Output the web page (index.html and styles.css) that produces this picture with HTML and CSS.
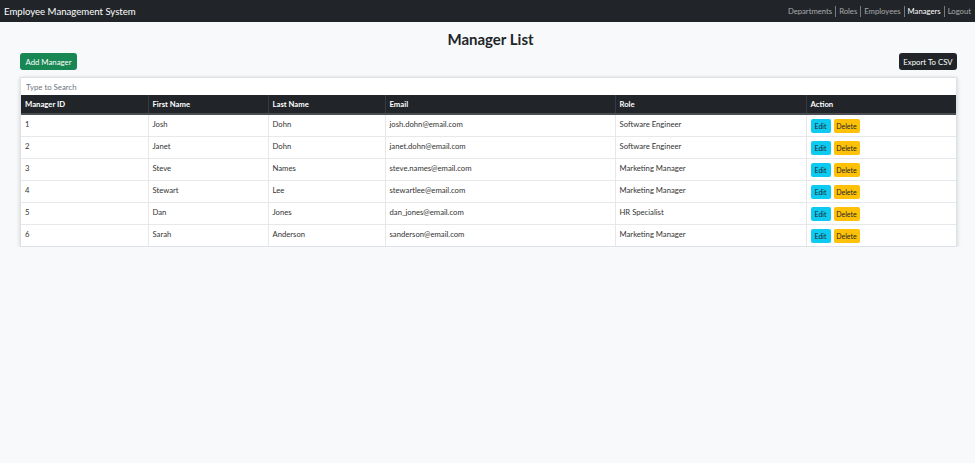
FILE: index.html
```html
<!DOCTYPE html>
<html>
<head>
<meta charset="utf-8">
<link rel="stylesheet" href="styles.css">
</head>
<body>
<nav class="navbar">
  <span class="brand">Employee Management System</span>
  <ul class="links">
    <li>Departments</li>
    <li>Roles</li>
    <li>Employees</li>
    <li class="active">Managers</li>
    <li>Logout</li>
  </ul>
</nav>
<main class="container">
  <h1 class="title">Manager List</h1>
  <div class="toolbar">
    <button class="btn btn-green">Add Manager</button>
    <button class="btn btn-dark">Export To CSV</button>
  </div>
  <div class="card">
    <input class="search" type="text" placeholder="Type to Search">
    <table class="table">
      <colgroup>
        <col style="width:127px"><col style="width:120px"><col style="width:117px"><col style="width:230px"><col style="width:191px"><col>
      </colgroup>
      <thead>
        <tr><th>Manager ID</th><th>First Name</th><th>Last Name</th><th>Email</th><th>Role</th><th>Action</th></tr>
      </thead>
      <tbody>
        <tr><td>1</td><td>Josh</td><td>Dohn</td><td>josh.dohn@email.com</td><td>Software Engineer</td><td><span class="act"><button class="sm edit">Edit</button><button class="sm del">Delete</button></span></td></tr>
        <tr><td>2</td><td>Janet</td><td>Dohn</td><td>janet.dohn@email.com</td><td>Software Engineer</td><td><span class="act"><button class="sm edit">Edit</button><button class="sm del">Delete</button></span></td></tr>
        <tr><td>3</td><td>Steve</td><td>Names</td><td>steve.names@email.com</td><td>Marketing Manager</td><td><span class="act"><button class="sm edit">Edit</button><button class="sm del">Delete</button></span></td></tr>
        <tr><td>4</td><td>Stewart</td><td>Lee</td><td>stewartlee@email.com</td><td>Marketing Manager</td><td><span class="act"><button class="sm edit">Edit</button><button class="sm del">Delete</button></span></td></tr>
        <tr><td>5</td><td>Dan</td><td>Jones</td><td>dan_jones@email.com</td><td>HR Specialist</td><td><span class="act"><button class="sm edit">Edit</button><button class="sm del">Delete</button></span></td></tr>
        <tr><td>6</td><td>Sarah</td><td>Anderson</td><td>sanderson@email.com</td><td>Marketing Manager</td><td><span class="act"><button class="sm edit">Edit</button><button class="sm del">Delete</button></span></td></tr>
      </tbody>
    </table>
  </div>
</main>
</body>
</html>
```
FILE: styles.css
```css
* { box-sizing: border-box; }
body {
  margin: 0;
  background: #f8f9fa;
  font-family: Lato, "Open Sans", sans-serif;
  color: #212529;
}
.navbar {
  height: 22px;
  background: #212529;
  display: flex;
  align-items: center;
  justify-content: space-between;
  padding: 0 4px;
}
.brand {
  color: #fff;
  font-size: 9.6px;
}
.links {
  list-style: none;
  margin: 0;
  padding: 0;
  display: flex;
  font-size: 7.7px;
}
.links li {
  color: rgba(255,255,255,0.6);
  padding: 0 3px;
  border-left: 1px solid rgba(255,255,255,0.4);
  line-height: 11px;
}
.links li:first-child { border-left: none; }
.links li:last-child { padding-right: 0; }
.links li.active { color: #fff; }
.container {
  padding: 0 18px 0 20px;
}
.title {
  margin: 7px 0 0;
  text-align: center;
  font-size: 15px;
  font-weight: 700;
  line-height: 20px;
  padding-left: 4px;
}
.toolbar {
  display: flex;
  justify-content: space-between;
  margin-top: 4px;
}
.btn {
  font-family: inherit;
  font-size: 7.8px;
  height: 17px;
  border: none;
  border-radius: 3px;
  color: #fff;
  padding: 0 5px;
  white-space: nowrap;
}
.btn-green { background: #198754; min-width: 57px; }
.btn-dark { background: #212529; width: 58px; padding: 0; }
.card {
  margin-top: 7px;
  background: #fff;
  border: 1px solid #dee2e6;
  box-shadow: 0 1px 4px rgba(0,0,0,0.18);
}
.search {
  display: block;
  width: 100%;
  height: 17px;
  border: none;
  padding: 0 5px;
  font-family: inherit;
  font-size: 7.8px;
  outline: none;
}
.search::placeholder { color: #6c757d; }
.table {
  width: 100%;
  border-collapse: collapse;
  table-layout: fixed;
  font-size: 7.7px;
}
.table th {
  background: #212529;
  color: #fff;
  text-align: left;
  font-weight: 700;
  height: 19px;
  padding: 0 4px;
  border-left: 1px solid #373b3e;
  border-bottom: 2px solid #4a4e52;
}
.table th:first-child, .table td:first-child { border-left: none; }
.table td {
  height: 22px;
  padding: 4px 4px 0;
  vertical-align: top;
  border-left: 1px solid #e6e8ea;
  border-bottom: 1px solid #e6e8ea;
  color: #333;
}
.table tr:last-child td { border-bottom: none; }
.act { display: flex; gap: 3px; }
.sm {
  font-family: inherit;
  font-size: 7px;
  height: 14px;
  border: none;
  border-radius: 2px;
  color: #212529;
  padding: 0;
  white-space: nowrap;
}
.edit { background: #0dcaf0; width: 20px; }
.del { background: #ffc107; width: 26px; }
```
